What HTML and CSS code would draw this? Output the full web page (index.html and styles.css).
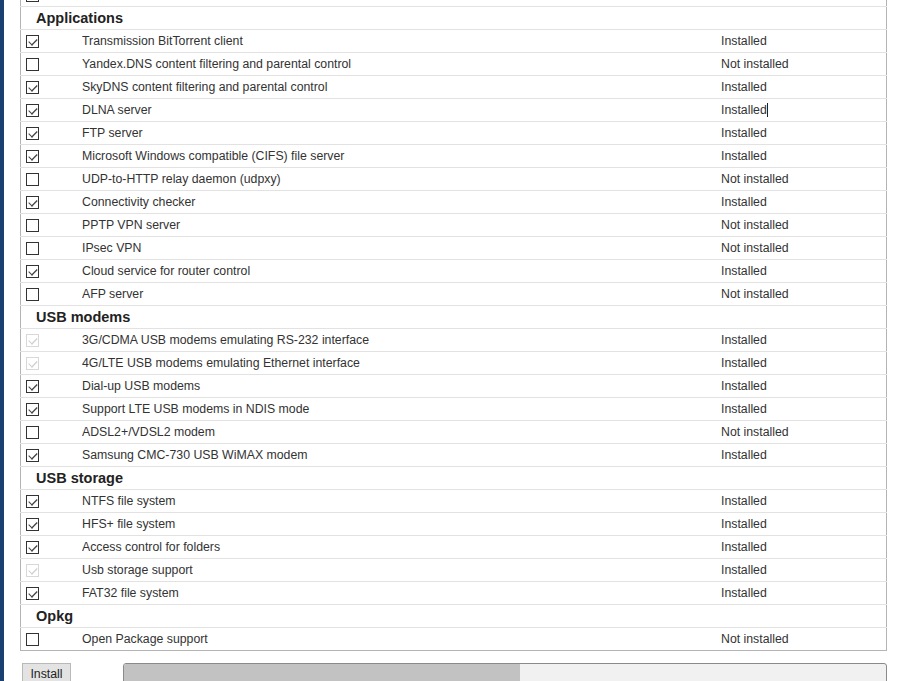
FILE: index.html
```html
<!DOCTYPE html>
<html>
<head>
<meta charset="utf-8">
<link rel="stylesheet" href="styles.css">
</head>
<body>
<div class="page">
  <div class="strip"></div>
  <div class="main">
    <table class="pkgs">
      <tr class="row"><td class="cb"><span class="box on"></span></td><td class="name"></td><td class="status"></td></tr>
      <tr class="head"><td colspan="3">Applications</td></tr>
      <tr class="row"><td class="cb"><span class="box on"></span></td><td class="name">Transmission BitTorrent client</td><td class="status">Installed</td></tr>
      <tr class="row"><td class="cb"><span class="box"></span></td><td class="name">Yandex.DNS content filtering and parental control</td><td class="status">Not installed</td></tr>
      <tr class="row"><td class="cb"><span class="box on"></span></td><td class="name">SkyDNS content filtering and parental control</td><td class="status">Installed</td></tr>
      <tr class="row"><td class="cb"><span class="box on"></span></td><td class="name">DLNA server</td><td class="status">Installed<span class="caret"></span></td></tr>
      <tr class="row"><td class="cb"><span class="box on"></span></td><td class="name">FTP server</td><td class="status">Installed</td></tr>
      <tr class="row"><td class="cb"><span class="box on"></span></td><td class="name">Microsoft Windows compatible (CIFS) file server</td><td class="status">Installed</td></tr>
      <tr class="row"><td class="cb"><span class="box"></span></td><td class="name">UDP-to-HTTP relay daemon (udpxy)</td><td class="status">Not installed</td></tr>
      <tr class="row"><td class="cb"><span class="box on"></span></td><td class="name">Connectivity checker</td><td class="status">Installed</td></tr>
      <tr class="row"><td class="cb"><span class="box"></span></td><td class="name">PPTP VPN server</td><td class="status">Not installed</td></tr>
      <tr class="row"><td class="cb"><span class="box"></span></td><td class="name">IPsec VPN</td><td class="status">Not installed</td></tr>
      <tr class="row"><td class="cb"><span class="box on"></span></td><td class="name">Cloud service for router control</td><td class="status">Installed</td></tr>
      <tr class="row"><td class="cb"><span class="box"></span></td><td class="name">AFP server</td><td class="status">Not installed</td></tr>
      <tr class="head"><td colspan="3">USB modems</td></tr>
      <tr class="row"><td class="cb"><span class="box on dis"></span></td><td class="name">3G/CDMA USB modems emulating RS-232 interface</td><td class="status">Installed</td></tr>
      <tr class="row"><td class="cb"><span class="box on dis"></span></td><td class="name">4G/LTE USB modems emulating Ethernet interface</td><td class="status">Installed</td></tr>
      <tr class="row"><td class="cb"><span class="box on"></span></td><td class="name">Dial-up USB modems</td><td class="status">Installed</td></tr>
      <tr class="row"><td class="cb"><span class="box on"></span></td><td class="name">Support LTE USB modems in NDIS mode</td><td class="status">Installed</td></tr>
      <tr class="row"><td class="cb"><span class="box"></span></td><td class="name">ADSL2+/VDSL2 modem</td><td class="status">Not installed</td></tr>
      <tr class="row"><td class="cb"><span class="box on"></span></td><td class="name">Samsung CMC-730 USB WiMAX modem</td><td class="status">Installed</td></tr>
      <tr class="head"><td colspan="3">USB storage</td></tr>
      <tr class="row"><td class="cb"><span class="box on"></span></td><td class="name">NTFS file system</td><td class="status">Installed</td></tr>
      <tr class="row"><td class="cb"><span class="box on"></span></td><td class="name">HFS+ file system</td><td class="status">Installed</td></tr>
      <tr class="row"><td class="cb"><span class="box on"></span></td><td class="name">Access control for folders</td><td class="status">Installed</td></tr>
      <tr class="row"><td class="cb"><span class="box on dis"></span></td><td class="name">Usb storage support</td><td class="status">Installed</td></tr>
      <tr class="row"><td class="cb"><span class="box on"></span></td><td class="name">FAT32 file system</td><td class="status">Installed</td></tr>
      <tr class="head"><td colspan="3">Opkg</td></tr>
      <tr class="row last"><td class="cb"><span class="box"></span></td><td class="name">Open Package support</td><td class="status">Not installed</td></tr>
    </table>
    <div class="actions">
      <button class="btn">Install</button>
      <div class="progress"><div class="fill" style="width: 52%"></div></div>
    </div>
  </div>
</div>
</body>
</html>
```

FILE: styles.css
```css
html, body {
  margin: 0;
  padding: 0;
  background: #fff;
  overflow: hidden;
}
body {
  font-family: "Liberation Sans", Arial, sans-serif;
  font-size: 12.3px;
  color: #333;
}
.page {
  display: flex;
  height: 681px;
  overflow: hidden;
}
.strip {
  width: 4px;
  flex: none;
  background: #1b3f70;
}
.main {
  flex: 1;
  padding-left: 16px;
  padding-right: 13px;
  margin-top: -17px;
}
.pkgs {
  width: 867px;
  border-collapse: collapse;
  border: 1px solid #b4b4b4;
  table-layout: fixed;
}
.pkgs td {
  padding: 0;
  height: 22px;
  border-bottom: 1px solid #e2e2e2;
  white-space: nowrap;
  overflow: hidden;
}
.pkgs tr.last td {
  border-bottom: none;
}
.cb {
  width: 56px;
  padding-left: 5px !important;
}
.name {
  width: 639px;
}
.status {
  position: relative;
}
.head td {
  font-size: 14.5px;
  font-weight: bold;
  color: #222;
  padding-left: 15px;
}
.box {
  display: block;
  width: 11px;
  height: 11px;
  border: 1px solid #333;
  background: #fff;
  position: relative;
}
.box.on::after {
  content: "";
  position: absolute;
  left: 2px;
  top: 1px;
  width: 7px;
  height: 3px;
  border-left: 1px solid #444;
  border-bottom: 1px solid #444;
  transform: translate(0px, 2px) rotate(-45deg) scale(1, 1.3);
  transform-origin: center;
}
.box.dis {
  border-color: #d8d8d8;
}
.box.dis::after {
  border-color: #d0d0d0;
}
.caret {
  display: inline-block;
  width: 1px;
  height: 14px;
  background: #222;
  vertical-align: -3px;
}
.actions {
  display: flex;
  gap: 52px;
  margin-top: 12px;
  padding-left: 2px;
}
.btn {
  font-family: "Liberation Sans", Arial, sans-serif;
  font-size: 12.3px;
  color: #222;
  background: #e3e3e3;
  border: 1px solid #b9b9b9;
  border-radius: 0;
  padding: 0 5px;
  height: 22px;
  width: 49px;
}
.progress {
  flex: 1;
  height: 22px;
  border: 1px solid #8a8a8a;
  border-radius: 3px;
  background: #f1f1f1;
  overflow: hidden;
  display: flex;
}
.fill {
  background: #c2c2c2;
  height: 100%;
}
```
